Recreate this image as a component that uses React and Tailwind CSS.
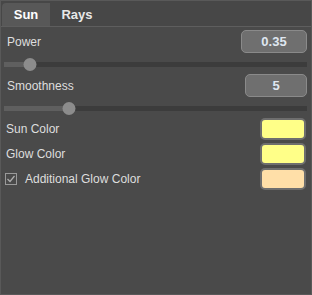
import React from 'react'

const font = { fontFamily: '"Liberation Sans", Arial, sans-serif' }

const ValueRow = ({ label, value, boxWidth }) => (
  <div className="flex items-center justify-between h-[23px]">
    <span className="pl-[3px] text-[12px] text-[#dedede]">{label}</span>
    <div
      className={`${boxWidth} h-[23px] rounded-[5px] bg-[#6f6f6f] border border-[#8a8a8a] flex items-center justify-center text-[13px] font-bold text-[#dfe6f0]`}
    >
      {value}
    </div>
  </div>
)

const Slider = ({ pct }) => (
  <div className="relative h-[12px] flex items-center">
    <div className="w-full h-[5px] bg-[#3c3c3c] flex">
      <div className="h-full bg-[#5f5f5f]" style={{ width: `${pct}%` }} />
    </div>
    <div
      className="absolute w-[13px] h-[13px] rounded-full bg-[#8c8c8c] -translate-x-1/2"
      style={{ left: `${pct}%` }}
    />
  </div>
)

const ColorRow = ({ label, color, checkbox }) => (
  <div className="flex items-center justify-between h-[22px]">
    <div className="flex items-center">
      {checkbox && (
        <span className="ml-[1px] mr-[8px] w-[12px] h-[12px] border border-[#9a9a9a] flex items-center justify-center">
          <svg width="10" height="10" viewBox="0 0 10 10">
            <path d="M1.5 5 L4 7.5 L8.5 2" stroke="#b0b0b0" strokeWidth="1.2" fill="none" />
          </svg>
        </span>
      )}
      <span className={`${checkbox ? '' : 'pl-[2px]'} text-[12px] text-[#dedede]`}>{label}</span>
    </div>
    <div
      className="w-[46px] h-[22px] rounded-[5px] border-2 border-[#6e6e6e] mr-[1px]"
      style={{ backgroundColor: color }}
    />
  </div>
)

export default function App() {
  return (
    <div className="w-[312px] h-[295px] bg-[#4a4a4a] border border-[#595959] flex flex-col" style={font}>
      <div className="h-[26px] bg-[#474747] border-b border-[#5e5e5e] flex items-end pl-[1px] shrink-0">
        <div className="w-[48px] h-[23px] bg-[#585858] rounded-tl-[4px] flex items-center justify-center text-[13px] font-bold text-white">
          Sun
        </div>
        <div className="ml-[9px] w-[36px] h-[23px] flex items-center justify-center text-[13px] font-bold text-[#e8e8e8]">
          Rays
        </div>
      </div>

      <div className="flex flex-col px-[3px] pr-[4px]">
        <div className="mt-[3px]">
          <ValueRow label="Power" value="0.35" boxWidth="w-[66px]" />
        </div>
        <div className="mt-[5px]">
          <Slider pct={8.6} />
        </div>
        <div className="mt-[4px]">
          <ValueRow label="Smoothness" value="5" boxWidth="w-[62px]" />
        </div>
        <div className="mt-[5px]">
          <Slider pct={21.5} />
        </div>
        <div className="mt-[4px] flex flex-col gap-[3px]">
          <ColorRow label="Sun Color" color="#ffff88" />
          <ColorRow label="Glow Color" color="#ffff88" />
          <ColorRow label="Additional Glow Color" color="#ffdfa8" checkbox />
        </div>
      </div>
    </div>
  )
}
